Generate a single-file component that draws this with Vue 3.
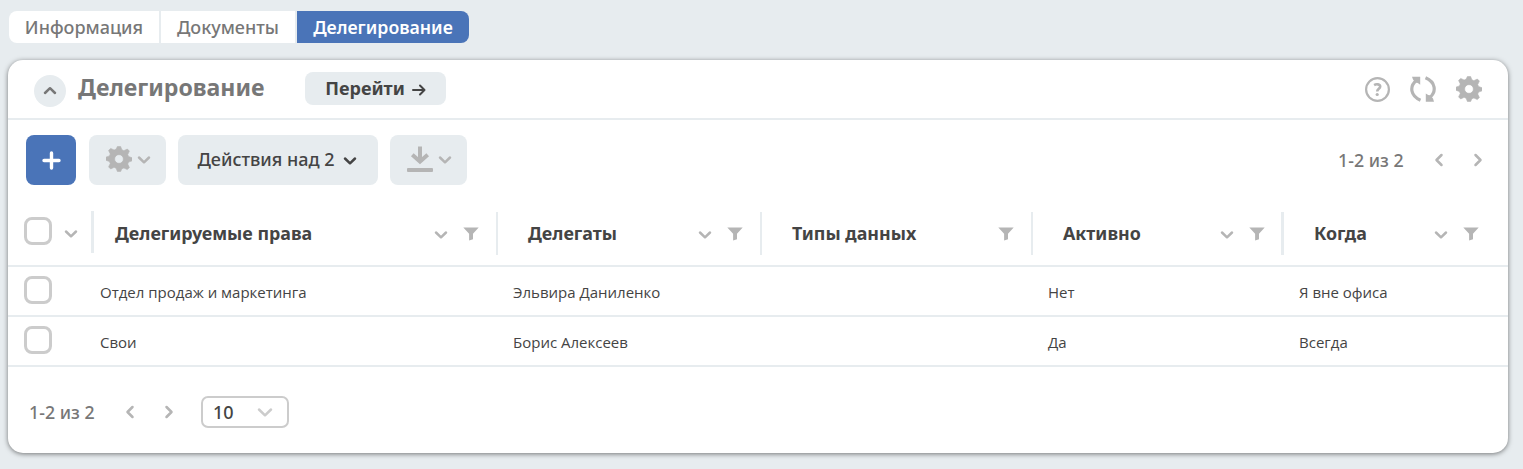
<script setup>
import { ref } from 'vue'

const tabs = ['Информация', 'Документы', 'Делегирование']
const activeTab = ref(2)
const columns = [
  { title: 'Делегируемые права', sortable: true },
  { title: 'Делегаты', sortable: true },
  { title: 'Типы данных', sortable: false },
  { title: 'Активно', sortable: true },
  { title: 'Когда', sortable: true },
]
const rows = [
  ['Отдел продаж и маркетинга', 'Эльвира Даниленко', '', 'Нет', 'Я вне офиса'],
  ['Свои', 'Борис Алексеев', '', 'Да', 'Всегда'],
]
const gearPath = 'M11 .4h3l1.300 3.300 1.900.8 3.300-1.600 2 2-1.600 3.300.8 1.900 3.300 1.200v3l-3.300 1.200-.8 1.900 1.600 3.300-2 2-3.300-1.600-1.900.8L14 24.600h-3l-1.300-3.300-1.900-.8-3.300 1.600-2-2 1.600-3.300-.8-1.900L0 13.700v-3l3.300-1.200.8-1.900-1.600-3.300 2-2 3.300 1.600 1.900-.8zM12.500 8.300a4.200 4.200 0 1 0 0 8.400 4.200 4.200 0 0 0 0-8.400z'
</script>

<template>
  <div class="page">
    <nav class="tabs">
      <button v-for="(tab, i) in tabs" :key="tab" class="tab" :class="{ active: i === activeTab }" @click="activeTab = i"><span>{{ tab }}</span></button>
    </nav>

    <section class="card">
      <header class="head">
        <button class="collapse">
          <svg width="14" height="9" viewBox="0 0 14 9"><path class="line" d="M2 7l5-4.800L12 7" /></svg>
        </button>
        <h2><span>Делегирование</span></h2>
        <button class="go"><span>Перейти</span>
          <svg width="14" height="12" viewBox="0 0 14 12"><path class="arrow" d="M1 6h11.500M8 1.500L12.500 6 8 10.500" /></svg>
        </button>
        <div class="head-icons">
          <svg width="26" height="26" viewBox="0 0 26 26">
            <circle class="ring" cx="13.500" cy="13.500" r="11.400" />
            <path class="mark" d="M10.100 9.100c2-1.200 6.100-1.200 6.100 1.500 0 2.200-3 2.300-3 5" />
            <circle cx="13.200" cy="18.500" r="1.600" fill="currentColor" />
          </svg>
          <svg width="26" height="26" viewBox="0 0 26 26">
            <path class="arc" d="M10.500 24.200C.5 20 -.8 10.500 6.200 4.500M15.500 1.800C25.500 6 26.800 15.500 19.800 21.500" />
            <path fill="currentColor" d="M2 .8h8.200V8.800L7.800 7 5.500 6.500 3 3.500zM24 25.700h-8.200V17.500l2.400 1.500 2.300.5 2.500 3z" />
          </svg>
          <svg width="26" height="26" viewBox="0 0 25 25"><path class="gear" fill-rule="evenodd" :d="gearPath" /></svg>
        </div>
      </header>

      <div class="toolbar">
        <button class="btn add">
          <svg width="19" height="19" viewBox="0 0 19 19"><path d="M9.500 2v15M2 9.500h15" /></svg>
        </button>
        <button class="btn icon-btn">
          <svg width="26" height="26" viewBox="0 0 25 25"><path class="gear" fill-rule="evenodd" :d="gearPath" /></svg>
          <svg class="chev" width="14" height="10" viewBox="0 0 14 10"><path class="line" d="M2 2.500l5 4.800 5-4.800" /></svg>
        </button>
        <button class="btn actions"><span>Действия над 2</span>
          <svg width="14" height="10" viewBox="0 0 14 10"><path class="line" d="M2 2.500l5 4.800 5-4.800" /></svg>
        </button>
        <button class="btn icon-btn download">
          <svg width="26" height="26" viewBox="0 0 26 26">
            <path fill="none" stroke="currentColor" stroke-width="4" d="M13 .5v14M5.300 8.700L13 15.500l7.700-6.800" />
            <rect y="22" width="26" height="4" rx="1" fill="currentColor" />
          </svg>
          <svg class="chev" width="14" height="10" viewBox="0 0 14 10"><path class="line" d="M2 2.500l5 4.800 5-4.800" /></svg>
        </button>
        <div class="pager">
          <span class="count">1-2 из 2</span>
          <svg width="10" height="14" viewBox="0 0 10 14"><path class="line" d="M7.500 2L2.500 7l5 5" /></svg>
          <svg width="10" height="14" viewBox="0 0 10 14"><path class="line" d="M2.500 2L7.500 7l-5 5" /></svg>
        </div>
      </div>

      <div class="table">
        <div class="row header">
          <div class="select">
            <i class="check"></i>
            <svg width="14" height="10" viewBox="0 0 14 10"><path class="line" d="M2 2.500l5 4.800 5-4.800" /></svg>
          </div>
          <div v-for="c in columns" :key="c.title" class="th">
            <span>{{ c.title }}</span>
            <div class="tools">
              <svg v-if="c.sortable" class="sort" width="14" height="10" viewBox="0 0 14 10"><path class="line" d="M2 2.500l5 4.800 5-4.800" /></svg>
              <svg width="16" height="14" viewBox="0 0 16 14"><path fill="currentColor" d="M.3.500h15.400L10 6.700v5.600L6.100 13.500V6.700z" /></svg>
            </div>
          </div>
        </div>
        <div v-for="(r, i) in rows" :key="i" class="row">
          <div class="select"><i class="check"></i></div>
          <div v-for="(cell, j) in r" :key="j" class="td"><span>{{ cell }}</span></div>
        </div>
      </div>

      <footer class="foot">
        <div class="pager">
          <span class="count">1-2 из 2</span>
          <svg width="10" height="14" viewBox="0 0 10 14"><path class="line" d="M7.500 2L2.500 7l5 5" /></svg>
          <svg width="10" height="14" viewBox="0 0 10 14"><path class="line" d="M2.500 2L7.500 7l-5 5" /></svg>
        </div>
        <div class="size"><span>10</span>
          <svg width="16" height="11" viewBox="0 0 16 11"><path class="line" d="M2 2.500l6 5.800 6-5.800" /></svg>
        </div>
      </footer>
    </section>
  </div>
</template>

<style>
body { margin: 0; background: #e7ecef; }
</style>

<style scoped>
.page { box-sizing: border-box; width: 1523px; height: 469px; padding: 11px 0 0 8px; overflow: hidden; background: #e7ecef; font-family: "Noto Sans", "Open Sans", sans-serif; color: #444; }
button { margin: 0; padding: 0; border: 0; font: inherit; color: inherit; display: flex; align-items: center; }
svg { display: block; flex: none; }
.line { fill: none; stroke: currentColor; stroke-width: 2.500; stroke-linecap: round; stroke-linejoin: round; }
.arrow { fill: none; stroke: currentColor; stroke-width: 2; stroke-linecap: round; stroke-linejoin: round; }
.gear { fill: currentColor; stroke: currentColor; stroke-width: .6; stroke-linejoin: round; }
.tabs { display: flex; gap: 2px; height: 32px; margin-left: 1px; }
.tab { justify-content: center; background: #fff; color: #777; font-size: 18px; font-weight: 500; }
.tab:nth-child(1) { width: 150px; border-radius: 8px 0 0 8px; }
.tab:nth-child(2) { width: 134px; }
.tab:nth-child(3) { width: 172px; border-radius: 0 8px 8px 0; }
.tab.active { background: #4a74b8; color: #fff; font-size: 17.700px; font-weight: 600; }
.card { width: 1500px; height: 393px; margin-top: 17px; background: #fff; border-radius: 15px; box-shadow: 0 1px 5px rgba(0, 0, 0, .5); }
.head { display: flex; align-items: center; box-sizing: border-box; height: 60px; padding: 0 26px; border-bottom: 2px solid #e7ecef; }
.collapse { justify-content: center; width: 32px; height: 32px; margin-top: 3px; border-radius: 50%; background: #e7ecef; color: #777; }
h2 { width: 227px; margin: -4px 0 0 12px; font-size: 23.100px; line-height: 32px; font-weight: 700; color: #777; }
.go { justify-content: center; gap: 7px; width: 141px; height: 33px; margin-top: -1px; border-radius: 8px; background: #e7ecef; font-size: 18px; font-weight: 700; }
.go svg { margin-top: 2px; }
.go span { margin-top: -1px; }
.head-icons { display: flex; gap: 20px; margin-left: auto; color: #b5b5b5; }
.ring { fill: none; stroke: currentColor; stroke-width: 2.200; }
.mark { fill: none; stroke: currentColor; stroke-width: 2.600; }
.arc { fill: none; stroke: currentColor; stroke-width: 3.200; }
.toolbar { display: flex; align-items: center; gap: 12px; height: 50px; padding: 15px 25px 0 18px; }
.btn { justify-content: center; height: 50px; border-radius: 8px; background: #e7ecef; }
.add { width: 50px; margin-right: 1px; background: #4a74b8; }
.add path { stroke: #fff; stroke-width: 3.400; stroke-linecap: round; }
.icon-btn { width: 77px; gap: 5px; padding-left: 1px; color: #b5b5b5; }
.icon-btn svg:first-child { margin-top: -2px; }
.actions { width: 200px; gap: 8px; padding-right: 2px; font-size: 18px; font-weight: 500; }
.actions span { margin-top: -2px; }
.actions svg { margin-top: 2px; }
.pager { display: flex; align-items: center; gap: 29px; color: #b5b5b5; }
.count { width: 67px; font-size: 17.800px; font-weight: 500; color: #777; white-space: nowrap; }
.toolbar .pager { margin-left: auto; }
.row { display: grid; grid-template-columns: 77px 413px 264px 271px 251px 1fr; box-sizing: border-box; height: 50px; border-bottom: 2px solid #e7ecef; }
.header { grid-template-columns: 86px 404px 264px 271px 251px 1fr; height: 82px; padding: 27px 0 10px; }
.select { display: flex; padding-left: 16px; }
.header .select { align-items: center; gap: 12px; height: 42px; margin-top: -1px; border-right: 3px solid #e7ecef; color: #b5b5b5; }
.header .select svg { margin-top: 4px; }
.header .select .check { margin: -3px 0 0; }
.check { box-sizing: border-box; width: 28px; height: 28px; margin-top: 9px; border: 3px solid #ccc; border-radius: 8px; }
.th { display: flex; align-items: center; justify-content: space-between; height: 43px; padding: 0 17px 0 30px; border-right: 2px solid #e7ecef; font-size: 17.850px; font-weight: 700; white-space: nowrap; }
.th > span { margin-top: -2px; }
.th:nth-child(2) { padding-left: 21px; }
.th:nth-child(5) { border-right-width: 3px; padding-right: 16px; }
.th:last-child { border: 0; padding-right: 29px; }
.tools { display: flex; align-items: center; gap: 15px; color: #b5b5b5; }
.sort { margin-top: 3px; }
.td { padding: 1px 0 0 15px; font-family: "Open Sans", "Noto Sans", sans-serif; font-size: 15px; line-height: 48px; white-space: nowrap; }
.foot { display: flex; align-items: center; height: 32px; padding: 29px 21px 0; }
.size { display: flex; align-items: center; justify-content: space-between; box-sizing: border-box; width: 88px; height: 32px; margin-left: 27px; padding: 0 14px 0 10px; border: 2px solid #ccc; border-radius: 7px; color: #ccc; }
.size span { font-size: 18px; font-weight: 500; color: #444; }
</style>
